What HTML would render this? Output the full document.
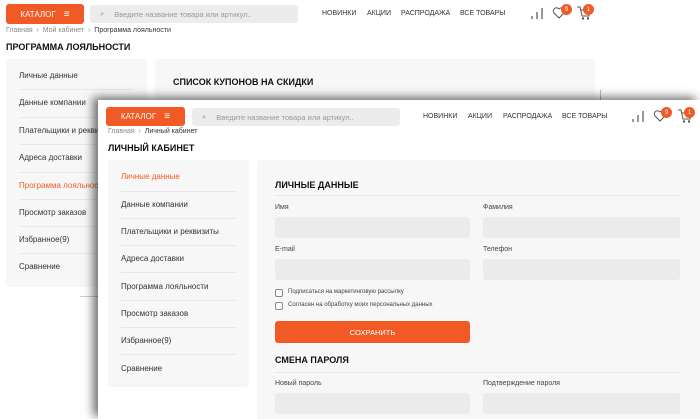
<!DOCTYPE html>
<html><head><meta charset="utf-8"><style>
*{margin:0;padding:0;box-sizing:border-box}
body{width:700px;height:419px;overflow:hidden;background:#fff;font-family:"Liberation Sans",sans-serif;position:relative;color:#222}
.a{position:absolute;white-space:nowrap}
.cat{background:#f15a24;color:#fff;border-radius:3px;font-size:8px;display:flex;align-items:center;justify-content:center;gap:8px}
.srch{background:#ececec;border-radius:3px;font-size:7.5px;color:#999;display:flex;align-items:center}
.nav{font-size:7px;color:#333}
.bc{font-size:7px;color:#888}
.bc b{font-weight:normal;color:#333}
.h{font-size:9px;font-weight:bold;color:#111}
.side{background:#f7f7f7;border-radius:4px}
.si{font-size:8px;color:#333}
.sep{height:1px;background:#e8e8e8}
.inp{background:#ebebeb;border-radius:3px;height:21px}
.lbl{font-size:7px;color:#444}
.badge{width:11px;height:11px;border-radius:50%;background:#f15a24;color:#fff;font-size:6px;display:flex;align-items:center;justify-content:center}
.cb{width:8px;height:8px;border:1px solid #888;border-radius:2px;background:#fff}
</style></head><body>
<!-- back window -->
<div class="a cat" style="left:6px;top:4px;width:78px;height:20px">КАТАЛОГ <span style="font-size:10px">≡</span></div>
<div class="a srch" style="left:90px;top:5px;width:208px;height:18px;padding-left:10px"><span style="color:#888;margin-right:10px">⌕</span>Введите название товара или артикул..</div>
<div class="a nav" style="left:322px;top:10px">НОВИНКИ</div>
<div class="a nav" style="left:367px;top:10px">АКЦИИ</div>
<div class="a nav" style="left:401px;top:10px">РАСПРОДАЖА</div>
<div class="a nav" style="left:460px;top:10px">ВСЕ ТОВАРЫ</div>
<svg class="a" style="left:530px;top:6px" width="14" height="14"><path d="M2 13V10M7 13V6M12 13V2" stroke="#555" stroke-width="1.2"/></svg>
<svg class="a" style="left:552px;top:6px" width="14" height="14"><path d="M7 12L2 7A3 3 0 0 1 7 3A3 3 0 0 1 12 7Z" fill="none" stroke="#555"/></svg>
<div class="a badge" style="left:561px;top:4px">9</div>
<svg class="a" style="left:576px;top:5px" width="16" height="16"><path d="M1 2H4L6 11H13L14 5H5" fill="none" stroke="#555"/><circle cx="7" cy="13.5" r="1.2" fill="#555"/><circle cx="12" cy="13.5" r="1.2" fill="#555"/></svg>
<div class="a badge" style="left:583px;top:4px">1</div>
<div class="a bc" style="left:6px;top:27px">Главная &nbsp;›&nbsp; Мой кабинет &nbsp;›&nbsp; <b>Программа лояльности</b></div>
<div class="a h" style="left:6px;top:42px">ПРОГРАММА ЛОЯЛЬНОСТИ</div>
<div class="a side" style="left:6px;top:59px;width:141px;height:228px"></div>
<div class="a si" style="left:19px;top:71px">Личные данные</div>
<div class="a si" style="left:19px;top:98px">Данные компании</div>
<div class="a si" style="left:19px;top:126px">Плательщики и реквизиты</div>
<div class="a si" style="left:19px;top:153px">Адреса доставки</div>
<div class="a si" style="left:19px;top:181px;color:#f15a24">Программа лояльности</div>
<div class="a si" style="left:19px;top:208px">Просмотр заказов</div>
<div class="a si" style="left:19px;top:235px">Избранное(9)</div>
<div class="a si" style="left:19px;top:262px">Сравнение</div>
<div class="a sep" style="left:19px;top:89px;width:115px"></div>
<div class="a sep" style="left:19px;top:117px;width:115px"></div>
<div class="a sep" style="left:19px;top:144px;width:115px"></div>
<div class="a sep" style="left:19px;top:172px;width:115px"></div>
<div class="a sep" style="left:19px;top:199px;width:115px"></div>
<div class="a sep" style="left:19px;top:226px;width:115px"></div>
<div class="a sep" style="left:19px;top:253px;width:115px"></div>
<div class="a side" style="left:155px;top:59px;width:440px;height:60px"></div>
<div class="a h" style="left:173px;top:77px">СПИСОК КУПОНОВ НА СКИДКИ</div>
<div class="a" style="left:80px;top:296px;width:50px;height:1px;background:#ccc"></div>
<div class="a" style="left:600px;top:90px;width:1px;height:12px;background:#bbb"></div>
<!-- front window -->
<div class="a" style="left:98px;top:100px;width:602px;height:319px;background:#fff;box-shadow:-5px -3px 9px rgba(0,0,0,.55)"></div>
<div class="a cat" style="left:106px;top:107px;width:79px;height:19px">КАТАЛОГ <span style="font-size:10px">≡</span></div>
<div class="a srch" style="left:192px;top:108px;width:208px;height:18px;padding-left:10px"><span style="color:#888;margin-right:10px">⌕</span>Введите название товара или артикул..</div>
<div class="a nav" style="left:423px;top:113px">НОВИНКИ</div>
<div class="a nav" style="left:468px;top:113px">АКЦИИ</div>
<div class="a nav" style="left:503px;top:113px">РАСПРОДАЖА</div>
<div class="a nav" style="left:562px;top:113px">ВСЕ ТОВАРЫ</div>
<svg class="a" style="left:631px;top:109px" width="14" height="14"><path d="M2 13V10M7 13V6M12 13V2" stroke="#555" stroke-width="1.2"/></svg>
<svg class="a" style="left:653px;top:109px" width="14" height="14"><path d="M7 12L2 7A3 3 0 0 1 7 3A3 3 0 0 1 12 7Z" fill="none" stroke="#555"/></svg>
<div class="a badge" style="left:661px;top:107px">9</div>
<svg class="a" style="left:677px;top:108px" width="16" height="16"><path d="M1 2H4L6 11H13L14 5H5" fill="none" stroke="#555"/><circle cx="7" cy="13.5" r="1.2" fill="#555"/><circle cx="12" cy="13.5" r="1.2" fill="#555"/></svg>
<div class="a badge" style="left:684px;top:107px">1</div>
<div class="a bc" style="left:108px;top:128px">Главная &nbsp;›&nbsp; <b>Личный кабинет</b></div>
<div class="a h" style="left:108px;top:143px">ЛИЧНЫЙ КАБИНЕТ</div>
<div class="a side" style="left:108px;top:160px;width:141px;height:227px"></div>
<div class="a si" style="left:121px;top:172px;color:#f15a24">Личные данные</div>
<div class="a si" style="left:121px;top:200px">Данные компании</div>
<div class="a si" style="left:121px;top:227px">Плательщики и реквизиты</div>
<div class="a si" style="left:121px;top:254px">Адреса доставки</div>
<div class="a si" style="left:121px;top:282px">Программа лояльности</div>
<div class="a si" style="left:121px;top:309px">Просмотр заказов</div>
<div class="a si" style="left:121px;top:336px">Избранное(9)</div>
<div class="a si" style="left:121px;top:364px">Сравнение</div>
<div class="a sep" style="left:121px;top:191px;width:115px"></div>
<div class="a sep" style="left:121px;top:218px;width:115px"></div>
<div class="a sep" style="left:121px;top:245px;width:115px"></div>
<div class="a sep" style="left:121px;top:272px;width:115px"></div>
<div class="a sep" style="left:121px;top:300px;width:115px"></div>
<div class="a sep" style="left:121px;top:327px;width:115px"></div>
<div class="a sep" style="left:121px;top:354px;width:115px"></div>
<div class="a side" style="left:257px;top:160px;width:443px;height:259px;border-radius:4px 0 0 0"></div>
<div class="a h" style="left:275px;top:180px">ЛИЧНЫЕ ДАННЫЕ</div>
<div class="a sep" style="left:275px;top:195px;width:405px"></div>
<div class="a lbl" style="left:275px;top:204px">Имя</div>
<div class="a lbl" style="left:483px;top:204px">Фамилия</div>
<div class="a inp" style="left:275px;top:217px;width:195px"></div>
<div class="a inp" style="left:483px;top:217px;width:197px"></div>
<div class="a lbl" style="left:275px;top:246px">E-mail</div>
<div class="a lbl" style="left:483px;top:246px">Телефон</div>
<div class="a inp" style="left:275px;top:259px;width:195px"></div>
<div class="a inp" style="left:483px;top:259px;width:197px"></div>
<div class="a cb" style="left:275px;top:289px"></div>
<div class="a" style="left:288px;top:289px;font-size:6px;color:#444">Подписаться на маркетинговую рассылку</div>
<div class="a cb" style="left:275px;top:302px"></div>
<div class="a" style="left:288px;top:302px;font-size:6px;color:#444">Согласен на обработку моих персональных данных</div>
<div class="a cat" style="left:275px;top:321px;width:195px;height:22px;font-size:7.5px">СОХРАНИТЬ</div>
<div class="a h" style="left:275px;top:355px">СМЕНА ПАРОЛЯ</div>
<div class="a sep" style="left:275px;top:372px;width:405px"></div>
<div class="a lbl" style="left:275px;top:380px">Новый пароль</div>
<div class="a lbl" style="left:483px;top:380px">Подтверждение пароля</div>
<div class="a inp" style="left:275px;top:393px;width:195px"></div>
<div class="a inp" style="left:483px;top:393px;width:197px"></div>
</body></html>
